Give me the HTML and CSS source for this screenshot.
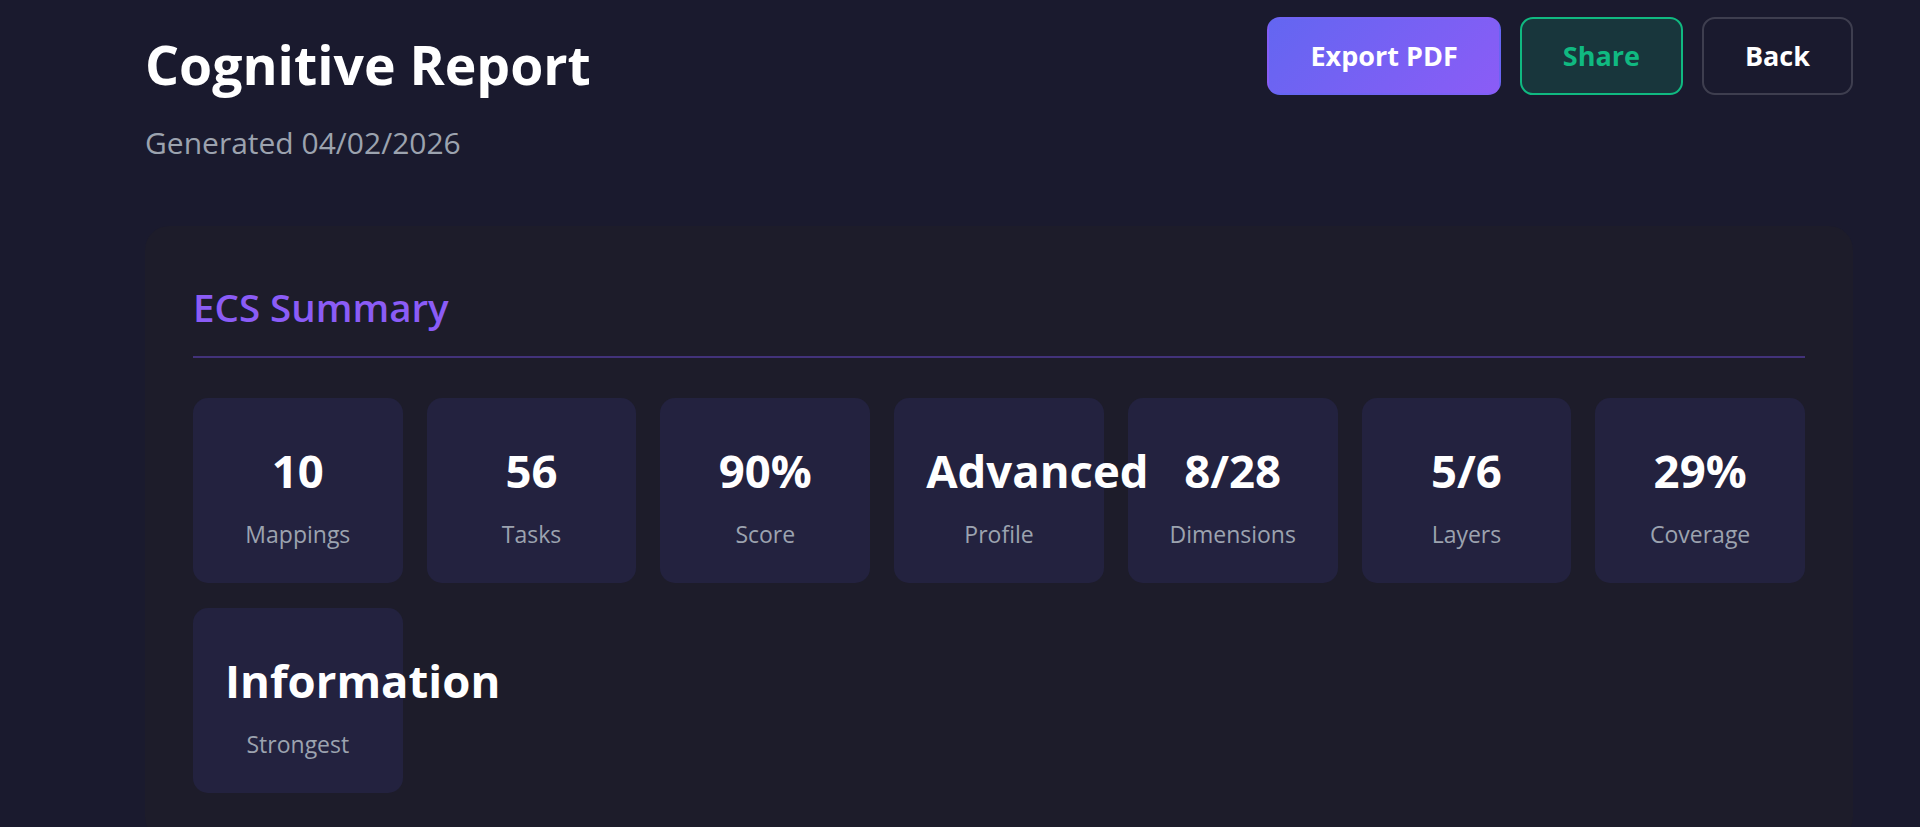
FILE: index.html
```html
<!DOCTYPE html>
<html lang="en">
<head>
<meta charset="utf-8">
<title>Cognitive Report</title>
<link rel="stylesheet" href="styles.css">
</head>
<body>
<div class="page">
  <header class="report-header">
    <div class="title-block">
      <h1 class="report-title">Cognitive Report</h1>
      <p class="generated">Generated 04/02/2026</p>
    </div>
    <div class="actions">
      <button class="btn btn-primary">Export PDF</button>
      <button class="btn btn-share">Share</button>
      <button class="btn btn-back">Back</button>
    </div>
  </header>

  <section class="card">
    <h2 class="card-title">ECS Summary</h2>
    <div class="stats-grid">
      <div class="stat"><div class="stat-value">10</div><div class="stat-label">Mappings</div></div>
      <div class="stat"><div class="stat-value">56</div><div class="stat-label">Tasks</div></div>
      <div class="stat"><div class="stat-value">90%</div><div class="stat-label">Score</div></div>
      <div class="stat"><div class="stat-value">Advanced</div><div class="stat-label">Profile</div></div>
      <div class="stat"><div class="stat-value">8/28</div><div class="stat-label">Dimensions</div></div>
      <div class="stat"><div class="stat-value">5/6</div><div class="stat-label">Layers</div></div>
      <div class="stat"><div class="stat-value">29%</div><div class="stat-label">Coverage</div></div>
      <div class="stat"><div class="stat-value">Information</div><div class="stat-label">Strongest</div></div>
    </div>
  </section>
</div>
</body>
</html>
```

FILE: styles.css
```css
* {
  box-sizing: border-box;
}

html, body {
  margin: 0;
  padding: 0;
}

body {
  background: #1a1a2e;
  color: #ffffff;
  font-family: "Open Sans", "Noto Sans", "Liberation Sans", sans-serif;
}

.page {
  padding: 17px 67px 60px 145px;
}

.report-header {
  display: flex;
  justify-content: space-between;
  align-items: flex-start;
}

.title-block {
  padding-top: 16px;
}

.report-title {
  margin: 0 0 25px;
  font-size: 53.5px;
  line-height: 1.2;
  font-weight: 700;
  color: #ffffff;
}

.generated {
  margin: 0;
  font-size: 30px;
  line-height: 1.4;
  color: #9ca3af;
}

.actions {
  display: flex;
  gap: 19px;
}

.btn {
  font-family: inherit;
  font-size: 27px;
  line-height: 34px;
  font-weight: 700;
  padding: 20px 41px;
  border-radius: 13px;
  border: 2px solid transparent;
  color: #ffffff;
  cursor: pointer;
}

.btn-primary {
  background: linear-gradient(135deg, #6366f1, #8b5cf6);
}

.btn-share {
  background: rgba(16, 185, 129, 0.18);
  border-color: #10b981;
  color: #10b981;
}

.btn-back {
  background: transparent;
  border-color: rgba(255, 255, 255, 0.16);
}

.card {
  margin-top: 62px;
  background: #1d1c2a;
  border-radius: 24px;
  padding: 56px 48px 48px;
}

.card-title {
  margin: 0 0 40px;
  padding-bottom: 24px;
  border-bottom: 2px solid #42327a;
  font-size: 38.5px;
  line-height: 1.3;
  font-weight: 600;
  color: #8b5cf6;
}

.stats-grid {
  display: grid;
  grid-template-columns: repeat(7, minmax(0, 1fr));
  gap: 25px 24px;
}

.stat {
  background: #23223f;
  border-radius: 15px;
  padding: 45px 32px 32px;
  text-align: center;
  min-width: 0;
}

.stat-value {
  position: relative;
  z-index: 1;
  font-size: 45.5px;
  line-height: 1.2;
  font-weight: 700;
  color: #ffffff;
  white-space: nowrap;
  margin-bottom: 19px;
}

.stat-label {
  font-size: 23px;
  line-height: 1.5;
  color: #9ca3af;
}
```
